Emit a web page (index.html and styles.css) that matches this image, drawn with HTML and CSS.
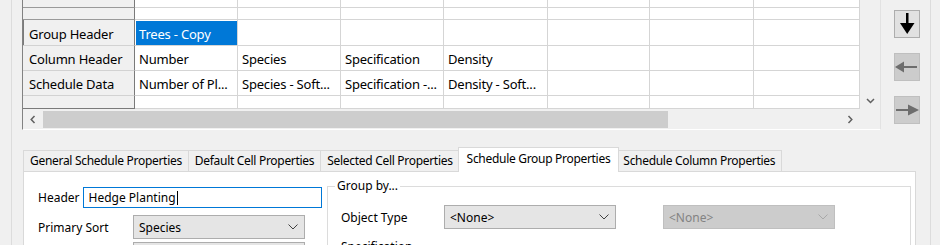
FILE: index.html
```html
<!DOCTYPE html>
<html lang="en">
<head>
    <meta charset="UTF-8">
    <title>Schedule Properties</title>
    <link rel="stylesheet" href="styles.css">
</head>
<body>
    <div class="window">
        <div class="gutter"></div>
        <div class="content">
            <div class="top-area">
                <div class="sheet">
                    <div class="sheet-main">
                        <div class="cells">
                            <div class="rh rh-frozen"></div><div class="cell"></div><div class="cell"></div><div class="cell"></div><div class="cell"></div><div class="cell"></div><div class="cell"></div><div class="cell"></div>
                            <div class="rh rh-frozen"></div><div class="cell"></div><div class="cell"></div><div class="cell"></div><div class="cell"></div><div class="cell"></div><div class="cell"></div><div class="cell"></div>
                            <div class="rh rh-current">Group Header</div><div class="cell cell-selected">Trees - Copy</div><div class="cell"></div><div class="cell"></div><div class="cell"></div><div class="cell"></div><div class="cell"></div><div class="cell"></div>
                            <div class="rh">Column Header</div><div class="cell">Number</div><div class="cell">Species</div><div class="cell">Specification</div><div class="cell">Density</div><div class="cell"></div><div class="cell"></div><div class="cell"></div>
                            <div class="rh">Schedule Data</div><div class="cell">Number of Pl...</div><div class="cell">Species - Soft...</div><div class="cell">Specification -...</div><div class="cell">Density - Soft...</div><div class="cell"></div><div class="cell"></div><div class="cell"></div>
                            <div class="rh rh-last"></div><div class="cell"></div><div class="cell"></div><div class="cell"></div><div class="cell"></div><div class="cell"></div><div class="cell"></div><div class="cell"></div>
                        </div>
                        <div class="vscroll">
                            <span class="scroll-btn">
                                <svg width="9" height="6" viewBox="0 0 9 6"><polyline points="1,1 4.5,4.5 8,1" fill="none" stroke="#606060" stroke-width="1.5"/></svg>
                            </span>
                        </div>
                    </div>
                    <div class="hscroll">
                        <span class="scroll-btn">
                            <svg width="6" height="9" viewBox="0 0 6 9"><polyline points="4.5,1 1.2,4.5 4.5,8" fill="none" stroke="#606060" stroke-width="1.5"/></svg>
                        </span>
                        <div class="hs-track"><div class="hs-thumb"></div></div>
                        <span class="scroll-btn">
                            <svg width="6" height="9" viewBox="0 0 6 9"><polyline points="1.5,1 4.8,4.5 1.5,8" fill="none" stroke="#606060" stroke-width="1.5"/></svg>
                        </span>
                        <span class="scroll-corner"></span>
                    </div>
                </div>
                <div class="side-buttons">
                    <button class="move-btn">
                        <svg width="24" height="26" viewBox="0 0 24 26"><rect x="11" y="2" width="2.5" height="11" fill="#000"/><path d="M5 12H19.5L12.2 23Z" fill="#000"/></svg>
                    </button>
                    <button class="move-btn move-btn-disabled">
                        <svg width="24" height="26" viewBox="0 0 24 26"><path d="M0 13L9 7.5V18.5Z" fill="#6d6d6d"/><rect x="8" y="12" width="14" height="2" fill="#6d6d6d"/></svg>
                    </button>
                    <button class="move-btn move-btn-disabled">
                        <svg width="24" height="26" viewBox="0 0 24 26"><rect x="1" y="12" width="13" height="2" fill="#6d6d6d"/><path d="M13 7.5L24 13L13 18.5Z" fill="#6d6d6d"/></svg>
                    </button>
                </div>
            </div>

            <div class="tabs">
                <div class="tab tab-first">General Schedule Properties</div>
                <div class="tab">Default Cell Properties</div>
                <div class="tab">Selected Cell Properties</div>
                <div class="tab tab-active">Schedule Group Properties</div>
                <div class="tab">Schedule Column Properties</div>
            </div>

            <div class="panel">
                <div class="fields">
                    <div class="field-row">
                        <label class="field-label">Header</label>
                        <div class="text-input">Hedge Planting<span class="caret"></span></div>
                    </div>
                    <div class="field-row field-row-combo">
                        <label class="field-label sort-label">Primary Sort</label>
                        <div class="combo">
                            <span>Species</span>
                            <svg width="10" height="6" viewBox="0 0 10 6"><polyline points="0.5,0.5 5,5 9.5,0.5" fill="none" stroke="#404040" stroke-width="1"/></svg>
                        </div>
                    </div>
                    <div class="field-row field-row-next">
                        <span class="field-label sort-label"></span>
                        <div class="combo"></div>
                    </div>
                </div>
                <fieldset class="group-by">
                    <legend>Group by...</legend>
                    <div class="group-row">
                        <span class="group-label">Object Type</span>
                        <div class="combo">
                            <span>&lt;None&gt;</span>
                            <svg width="10" height="6" viewBox="0 0 10 6"><polyline points="0.5,0.5 5,5 9.5,0.5" fill="none" stroke="#404040" stroke-width="1"/></svg>
                        </div>
                        <div class="combo combo-disabled">
                            <span>&lt;None&gt;</span>
                            <svg width="10" height="6" viewBox="0 0 10 6"><polyline points="0.5,0.5 5,5 9.5,0.5" fill="none" stroke="#a8a8a8" stroke-width="1"/></svg>
                        </div>
                    </div>
                    <div class="group-row">
                        <span class="group-label">Specification</span>
                    </div>
                </fieldset>
            </div>
        </div>
    </div>
</body>
</html>
```

FILE: styles.css
```css
body {
    margin: 0;
    background-color: #f0f0f0;
    font-family: "Segoe UI", "Noto Sans", sans-serif;
    font-size: 12px;
    color: #000;
    overflow: hidden;
}
.window {
    display: flex;
    height: 245px;
    overflow: hidden;
}
.gutter {
    width: 11px;
    border-right: 1px solid #dcdcdc;
}
.content {
    width: 919px;
    box-sizing: border-box;
    padding-left: 10px;
    border-right: 1px solid #dcdcdc;
}

/* spreadsheet */
.top-area {
    display: flex;
}
.sheet {
    width: 859px;
    box-sizing: border-box;
    border-left: 1px solid #828282;
    border-right: 1px solid #e2e2e2;
    border-bottom: 1px solid #fff;
    background-color: #fff;
}
.sheet-main {
    display: flex;
}
.cells {
    display: grid;
    grid-template-columns: 112px 103px 103px 103px 104px 102px 104px 106px;
    grid-template-rows: 8px 12px 26px 25px 25px 13px;
    font-size: 13px;
    letter-spacing: -0.2px;
}
.cell, .rh {
    box-sizing: border-box;
    border-right: 1px solid #d5d5d5;
    border-bottom: 1px solid #d5d5d5;
    padding: 2px 0 0 4px;
    display: flex;
    align-items: center;
    white-space: nowrap;
    overflow: hidden;
}
.rh {
    background-color: #f0f0f0;
    border-right-color: #7a7a7a;
    border-bottom-color: #d2d2d2;
    padding-left: 6px;
}
.rh-frozen {
    border-bottom-color: #9a9a9a;
}
.rh-current {
    box-shadow: inset 1px 0 0 #7a7a7a;
}
.rh-last {
    border-bottom-color: #7a7a7a;
}
.cell-selected {
    background-color: #0078d7;
    color: #fff;
    box-shadow: inset 1px 1px 0 #fff;
}
.vscroll {
    width: 20px;
    background-color: #f0f0f0;
    display: flex;
    flex-direction: column;
    justify-content: flex-end;
}
.scroll-btn {
    width: 20px;
    height: 17px;
    display: flex;
    align-items: center;
    justify-content: center;
}
.hscroll {
    display: flex;
    height: 20px;
    background-color: #f0f0f0;
}
.hscroll .scroll-btn {
    height: 20px;
}
.hs-track {
    flex: 1;
    padding-top: 2px;
}
.hs-thumb {
    width: 625px;
    height: 17px;
    background-color: #cdcdcd;
}
.scroll-corner {
    width: 20px;
}

.side-buttons {
    width: 49px;
    box-sizing: border-box;
    padding: 10px 0 0 13px;
    display: flex;
    flex-direction: column;
    gap: 15px;
}
.move-btn {
    width: 26px;
    height: 28px;
    padding: 0;
    border: 1px solid #adadad;
    background-color: #e1e1e1;
    display: block;
}
.move-btn svg {
    display: block;
}
.move-btn-disabled {
    background-color: #cccccc;
    border-color: #bfbfbf;
}

/* tabs */
.tabs {
    display: flex;
    align-items: flex-end;
    height: 24px;
    margin: 17px 0 0 1px;
    letter-spacing: -0.3px;
}
.tab {
    height: 21px;
    box-sizing: border-box;
    padding: 0 6px;
    line-height: 19px;
    border-top: 1px solid #d9d9d9;
    border-right: 1px solid #d9d9d9;
    background-color: #f0f0f0;
    white-space: nowrap;
}
.tab-first {
    border-left: 1px solid #d9d9d9;
}
.tab-active {
    position: relative;
    height: 25px;
    margin: 0 -2px -1px;
    padding: 0 8px;
    line-height: 21px;
    border-left: 1px solid #d9d9d9;
    background-color: #fff;
}

/* panel */
.panel {
    width: 893px;
    height: 80px;
    box-sizing: border-box;
    margin-left: 1px;
    border: 1px solid #d9d9d9;
    background-color: #fff;
    padding: 6px 4px 0 14px;
    display: flex;
}
.fields {
    width: 284px;
    margin-top: 9px;
}
.field-row {
    display: flex;
    align-items: center;
    height: 21px;
}
.field-row-combo {
    height: 24px;
    margin-top: 7px;
}
.field-row-next {
    height: 24px;
    margin-top: 3px;
}
.field-label {
    margin-right: 3px;
}
.sort-label {
    width: 95px;
    margin-right: 0;
}
.text-input {
    flex: 1;
    height: 21px;
    box-sizing: border-box;
    border: 1px solid #0078d7;
    padding-left: 5px;
    display: flex;
    align-items: center;
    white-space: nowrap;
}
.caret {
    display: inline-block;
    width: 1px;
    height: 14px;
    margin-left: 1px;
    background-color: #000;
}
.combo {
    width: 172px;
    height: 24px;
    box-sizing: border-box;
    border: 1px solid #adadad;
    background-color: #e5e5e5;
    padding: 0 6px 0 5px;
    display: flex;
    align-items: center;
    justify-content: space-between;
}
.combo-disabled {
    margin-left: 47px;
    background-color: #cccccc;
    border-color: #bfbfbf;
    color: #838383;
}
.group-by {
    width: 584px;
    box-sizing: border-box;
    margin: 0 0 0 5px;
    padding: 11px 0 0 13px;
    border: 1px solid #dcdcdc;
    min-width: 0;
}
.group-by legend {
    padding: 0 2px;
    margin-left: -6px;
    line-height: 16px;
}
.group-row {
    display: flex;
    align-items: center;
    height: 24px;
    margin-bottom: 5px;
}
.group-label {
    width: 103px;
}
```
